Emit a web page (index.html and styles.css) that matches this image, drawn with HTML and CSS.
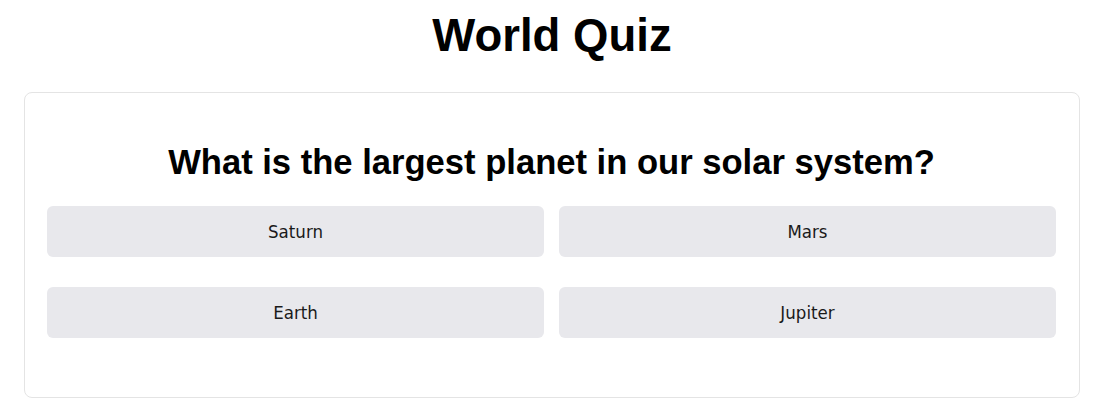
FILE: index.html
```html
<!DOCTYPE html>
<html lang="en">
<head>
<meta charset="utf-8">
<title>World Quiz</title>
<link rel="stylesheet" href="styles.css">
</head>
<body>
<h1 class="title">World Quiz</h1>
<main class="card">
  <h2 class="question">What is the largest planet in our solar system?</h2>
  <div class="answers">
    <button class="answer">Saturn</button>
    <button class="answer">Mars</button>
    <button class="answer">Earth</button>
    <button class="answer">Jupiter</button>
  </div>
</main>
</body>
</html>
```

FILE: styles.css
```css
html, body {
  margin: 0;
  padding: 0;
  background: #ffffff;
}
body {
  font-family: "Liberation Sans", Arial, sans-serif;
  color: #000;
  padding: 0 18px 0 24px;
}
.title {
  margin: 10px 0 31px 0;
  font-size: 45.5px;
  font-weight: bold;
  line-height: 51px;
  text-align: center;
}
.card {
  border: 1px solid #e4e4e4;
  border-radius: 8px;
  padding: 50px 23px 59px 22px;
  background: #fff;
}
.question {
  margin: 0 0 24px 0;
  font-size: 34.6px;
  line-height: 39px;
  font-weight: bold;
  text-align: center;
}
.answers {
  display: grid;
  grid-template-columns: 1fr 1fr;
  column-gap: 15px;
  row-gap: 30px;
}
.answer {
  height: 51px;
  border: none;
  border-radius: 6px;
  background: #e8e8ec;
  color: #1a1a1a;
  font-family: "DejaVu Sans", sans-serif;
  font-stretch: condensed;
  font-size: 18.5px;
  padding: 0;
  cursor: pointer;
}
```
